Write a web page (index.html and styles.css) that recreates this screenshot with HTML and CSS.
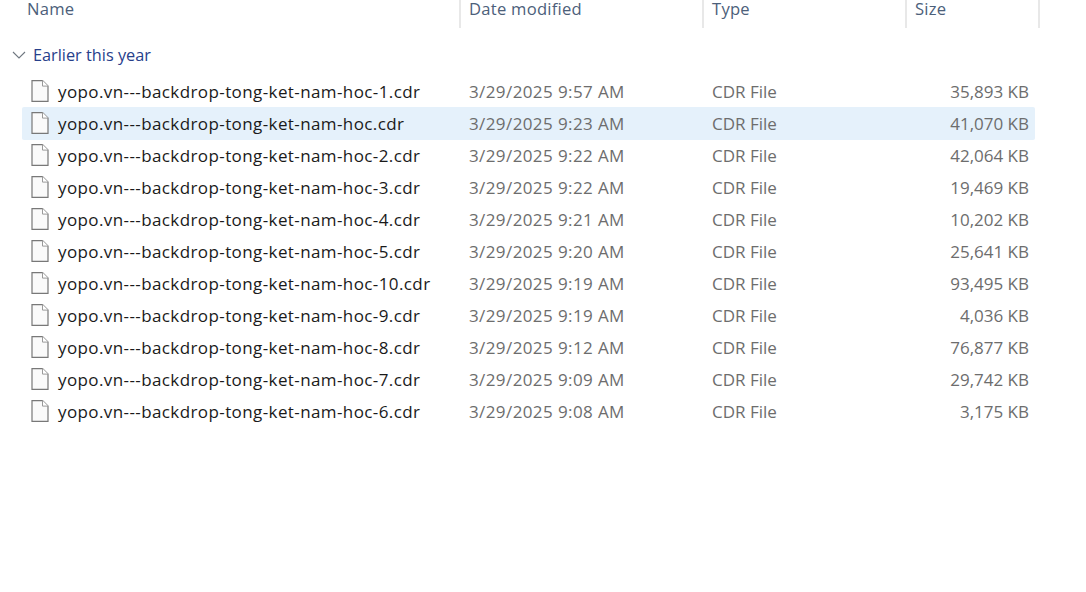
FILE: index.html
```html
<!DOCTYPE html>
<html lang="en">
<head>
<meta charset="utf-8">
<title>Files</title>
<link rel="stylesheet" href="styles.css">
</head>
<body>
<svg class="defs" width="0" height="0" aria-hidden="true">
  <symbol id="file" viewBox="0 0 18 22">
    <path d="M1 .6H11.5L17 6.1V21.4H1Z" fill="#fafafa" stroke="#787878" stroke-width="1.2"/>
    <path d="M11.5 .6V6.1H17" fill="#fff" stroke="#9a9a9a" stroke-width="1"/>
  </symbol>
</svg>
<div class="header">
  <div class="hcell hname">Name</div>
  <div class="hcell hdate">Date modified</div>
  <div class="hcell htype">Type</div>
  <div class="hcell hsize">Size</div>
</div>
<div class="group">
  <svg class="chevron" viewBox="0 0 14 8" width="14" height="8"><path d="M1 1L7 7L13 1" fill="none" stroke="#6f7780" stroke-width="1.1"/></svg>
  <span>Earlier this year</span>
</div>
<div class="rows">
  <div class="row"><div class="cname"><svg class="ficon"><use href="#file"/></svg><span>yopo.vn---backdrop-tong-ket-nam-hoc-1.cdr</span></div><div class="cdate">3/29/2025 9:57 AM</div><div class="ctype">CDR File</div><div class="csize">35,893 KB</div></div>
  <div class="row selected"><div class="cname"><svg class="ficon"><use href="#file"/></svg><span>yopo.vn---backdrop-tong-ket-nam-hoc.cdr</span></div><div class="cdate">3/29/2025 9:23 AM</div><div class="ctype">CDR File</div><div class="csize">41,070 KB</div></div>
  <div class="row"><div class="cname"><svg class="ficon"><use href="#file"/></svg><span>yopo.vn---backdrop-tong-ket-nam-hoc-2.cdr</span></div><div class="cdate">3/29/2025 9:22 AM</div><div class="ctype">CDR File</div><div class="csize">42,064 KB</div></div>
  <div class="row"><div class="cname"><svg class="ficon"><use href="#file"/></svg><span>yopo.vn---backdrop-tong-ket-nam-hoc-3.cdr</span></div><div class="cdate">3/29/2025 9:22 AM</div><div class="ctype">CDR File</div><div class="csize">19,469 KB</div></div>
  <div class="row"><div class="cname"><svg class="ficon"><use href="#file"/></svg><span>yopo.vn---backdrop-tong-ket-nam-hoc-4.cdr</span></div><div class="cdate">3/29/2025 9:21 AM</div><div class="ctype">CDR File</div><div class="csize">10,202 KB</div></div>
  <div class="row"><div class="cname"><svg class="ficon"><use href="#file"/></svg><span>yopo.vn---backdrop-tong-ket-nam-hoc-5.cdr</span></div><div class="cdate">3/29/2025 9:20 AM</div><div class="ctype">CDR File</div><div class="csize">25,641 KB</div></div>
  <div class="row"><div class="cname"><svg class="ficon"><use href="#file"/></svg><span>yopo.vn---backdrop-tong-ket-nam-hoc-10.cdr</span></div><div class="cdate">3/29/2025 9:19 AM</div><div class="ctype">CDR File</div><div class="csize">93,495 KB</div></div>
  <div class="row"><div class="cname"><svg class="ficon"><use href="#file"/></svg><span>yopo.vn---backdrop-tong-ket-nam-hoc-9.cdr</span></div><div class="cdate">3/29/2025 9:19 AM</div><div class="ctype">CDR File</div><div class="csize">4,036 KB</div></div>
  <div class="row"><div class="cname"><svg class="ficon"><use href="#file"/></svg><span>yopo.vn---backdrop-tong-ket-nam-hoc-8.cdr</span></div><div class="cdate">3/29/2025 9:12 AM</div><div class="ctype">CDR File</div><div class="csize">76,877 KB</div></div>
  <div class="row"><div class="cname"><svg class="ficon"><use href="#file"/></svg><span>yopo.vn---backdrop-tong-ket-nam-hoc-7.cdr</span></div><div class="cdate">3/29/2025 9:09 AM</div><div class="ctype">CDR File</div><div class="csize">29,742 KB</div></div>
  <div class="row"><div class="cname"><svg class="ficon"><use href="#file"/></svg><span>yopo.vn---backdrop-tong-ket-nam-hoc-6.cdr</span></div><div class="cdate">3/29/2025 9:08 AM</div><div class="ctype">CDR File</div><div class="csize">3,175 KB</div></div>
</div>
</body>
</html>
```

FILE: styles.css
```css
* { box-sizing: border-box; }
html, body { margin: 0; padding: 0; }
body {
  width: 1086px;
  height: 592px;
  overflow: hidden;
  background: #fff;
  font-family: "Open Sans", "Noto Sans", sans-serif;
  font-size: 17px;
}
.defs { display: block; height: 0; }
.header {
  display: grid;
  grid-template-columns: 459px 243px 203px 135px;
  height: 28px;
}
.hcell {
  height: 28px;
  line-height: 17px;
  color: #4c607a;
  font-size: 16.6px;
  letter-spacing: 0.25px;
}
.hname { padding-left: 27px; }
.hdate, .htype, .hsize { border-left: 2px solid #e8e8e8; padding-left: 8px; }
.hsize { border-right: 2px solid #e8e8e8; }
.group {
  display: flex;
  align-items: center;
  height: 22px;
  margin-top: 16px;
  padding-left: 12px;
  gap: 7px;
  color: #27408b;
  font-size: 16.3px;
}
.rows {
  display: flex;
  flex-direction: column;
  margin-top: 9px;
  padding-left: 22px;
}
.row {
  display: grid;
  grid-template-columns: 437px 243px 203px 130px;
  align-items: center;
  width: 1013px;
  height: 32px;
  color: #6d6d6d;
  border-radius: 2px;
}
.selected { background: #e5f1fb; box-shadow: 0 1px 0 #e5f1fb; }
.cname {
  display: flex;
  align-items: center;
  gap: 9px;
  padding-left: 9px;
  color: #1a1a1a;
  letter-spacing: 0.4px;
}
.ficon { width: 18px; height: 22px; flex: none; }
.cdate { padding-left: 10px; letter-spacing: 0.4px; }
.ctype { padding-left: 10px; }
.csize { text-align: right; padding-right: 6px; }
```
